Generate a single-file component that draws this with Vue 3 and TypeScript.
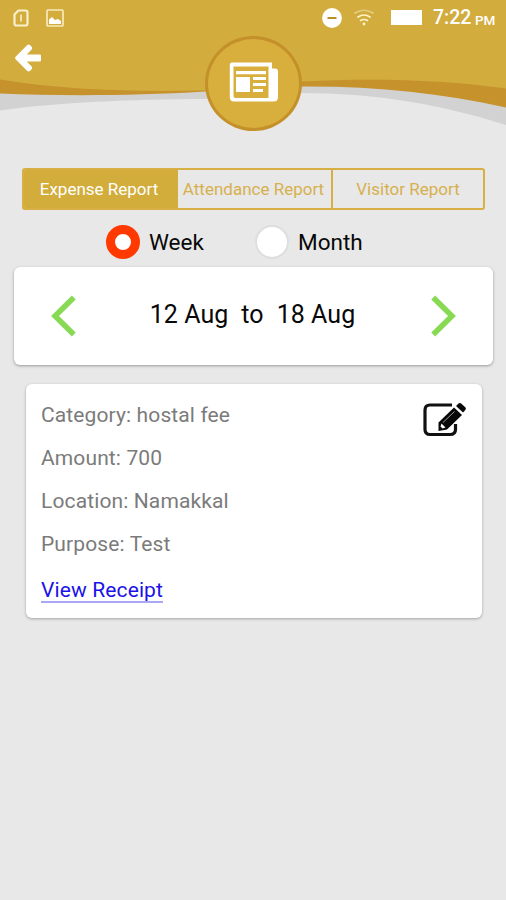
<script setup lang="ts">
import { ref } from 'vue'

interface Detail {
  label: string
  value: string
}

const tabs: string[] = ['Expense Report', 'Attendance Report', 'Visitor Report']
const activeTab = ref(0)
const periods: string[] = ['Week', 'Month']
const period = ref('Week')
const details: Detail[] = [
  { label: 'Category', value: 'hostal fee' },
  { label: 'Amount', value: '700' },
  { label: 'Location', value: 'Namakkal' },
  { label: 'Purpose', value: 'Test' },
]
</script>

<template>
  <div class="screen">
    <header class="header">
      <svg class="wave" viewBox="0 0 506 130" aria-hidden="true">
        <path fill="#d2d2d2" d="M0 0H506V125C440 104 375 93 300 93L205 99C130 99.500 60 102 0 110.500Z" />
        <path fill="#c5922b" d="M0 0H506V107.500C440 93 375 86 302 86.500L205 91.500C130 96 60 96 0 93.500Z" />
        <path fill="#d2ac3d" d="M0 0H506V88.500C440 79 370 78 302 81.500L205 90.500C130 92 65 90 0 79.500Z" />
      </svg>
      <div class="status">
        <svg class="sim" viewBox="0 0 16 18" fill="none" stroke="#faf0cc" stroke-width="2.200">
          <path d="M5.500 1.500H12.500Q14.500 1.500 14.500 3.500V14.500Q14.500 16.500 12.500 16.500H3.500Q1.500 16.500 1.500 14.500V5.500Z" />
          <path d="M8 5.500V12.500" stroke-width="1.600" />
        </svg>
        <svg class="photo" viewBox="0 0 18 18">
          <rect x="1" y="1" width="16" height="16" rx="1" fill="none" stroke="#f8e9b9" stroke-width="1.700" />
          <path d="M3 10.500L6 8L9 11L12 10L15 12V15H3Z" fill="#fff" />
        </svg>
        <span class="spacer"></span>
        <svg class="dnd" viewBox="0 0 20 20">
          <circle cx="10" cy="10" r="9.900" fill="#fff" />
          <path d="M5.500 10H14.500" stroke="#b98f28" stroke-width="2" />
        </svg>
        <svg class="wifi" viewBox="0 0 20 17" fill="none" stroke-linecap="round">
          <path d="M1 4Q10 -1.500 19 4" stroke="#e4cc81" stroke-width="1.700" />
          <path d="M4 8Q10 4 16 8M6.500 11.500Q10 9.500 13.500 11.500" stroke="#fff4cb" stroke-width="1.700" />
          <circle cx="10" cy="15" r="1.400" fill="#fff4cb" />
        </svg>
        <span class="battery"></span>
        <span class="time">7:22</span><span class="meridiem">PM</span>
      </div>
      <button class="back" aria-label="Back">
        <svg viewBox="0 0 26 28">
          <path fill="#fff" d="M.6 12.800L12 1.200Q13.600 -.2 15.200 1.200L16.600 2.800Q17.800 4.300 16.400 5.800L11.800 10.600H24.500Q26 10.600 26 12V16.200Q26 17.600 24.500 17.600H11.800L16.400 22.200Q17.800 23.700 16.600 25.200L15.200 26.800Q13.600 28.200 12 26.800L.6 15.200Q-.4 14 .6 12.800Z" />
        </svg>
      </button>
      <div class="badge">
        <svg viewBox="0 0 50 40">
          <path fill="#fff" fill-rule="evenodd" d="M3 .5H43V6.500H46Q49 6.500 49 9.500V35Q49 39.500 44.500 39.500H5Q.8 39.500 .8 35V2.500Q.8 .5 3 .5ZM4.500 4.500V34Q4.500 36 6.500 36H39.500V4.500Z" />
          <path fill="#fff" d="M7 9H37V12.300H7ZM7 15H21V30H7ZM24 15H37V18H24ZM24 21H37V24H24ZM24 27H34V30H24Z" />
        </svg>
      </div>
    </header>

    <nav class="tabs">
      <button v-for="(tab, i) in tabs" :key="tab" class="tab" :class="{ active: i === activeTab }" @click="activeTab = i">{{ tab }}</button>
    </nav>

    <div class="periods">
      <label v-for="name in periods" :key="name" class="period" @click="period = name">
        <span class="radio" :class="{ checked: period === name }"></span>{{ name }}
      </label>
    </div>

    <section class="range">
      <svg class="chevron" viewBox="0 0 26 42"><path d="M22.800 2.500L4 21L22.800 39.500" /></svg>
      <div class="dates"><span>12 Aug</span><span class="to">to</span><span>18 Aug</span></div>
      <svg class="chevron" viewBox="0 0 26 42"><path d="M3.200 2.500L22 21L3.200 39.500" /></svg>
    </section>

    <article class="expense">
      <div class="details">
        <p v-for="item in details" :key="item.label">{{ item.label }}: {{ item.value }}</p>
        <a class="receipt">View Receipt</a>
      </div>
      <svg class="edit" viewBox="0 0 44 36">
        <path d="M29 3H7Q2 3 2 8V27.500Q2 32.500 7 32.500H27Q32.500 32.500 32.500 27.500V22" fill="none" stroke="#111" stroke-width="3.200" />
        <path fill="#080808" d="M15.500 20.500L31 5.500L39 13L24 27.500L15.500 29Z" />
        <path fill="#080808" d="M33 4L35.500 1.500Q36.800 .3 38.200 1.500L42.500 5.500Q43.500 6.800 42.300 8L40 10.500Z" />
        <path d="M20 20.500L31.500 9.500" stroke="#999" stroke-width="1" />
        <path d="M18.500 21.500L22.500 25.500L19.500 26.500L17.500 24.500Z" fill="#fff" />
      </svg>
    </article>
  </div>
</template>

<style>
body {
  margin: 0;
  background: #e8e8e8;
}
</style>

<style scoped>
.screen {
  box-sizing: border-box;
  width: 506px;
  height: 900px;
  overflow: hidden;
  background: #e8e8e8;
  font-family: Roboto, "Liberation Sans", sans-serif;
}
.header {
  position: relative;
  height: 168px;
}
.wave {
  position: absolute;
  top: 0;
  left: 0;
  width: 506px;
  height: 130px;
}
.status {
  position: relative;
  display: flex;
  align-items: center;
  height: 35px;
  padding: 0 11px 0 13px;
  color: #fff;
}
.sim { width: 16px; height: 18px; }
.photo { width: 18px; height: 18px; margin-left: 17px; }
.spacer { flex: 1; }
.dnd { width: 20px; height: 20px; }
.wifi { width: 20px; height: 17px; margin: 0 17px 0 12px; }
.battery { width: 31px; height: 15px; background: #fff; margin-right: 11px; }
.time { width: 42px; font-size: 19.500px; font-weight: 500; line-height: 36px; padding-top: 1px; white-space: nowrap; }
.meridiem { width: 20px; font-size: 13.500px; font-weight: 500; line-height: 20px; padding-top: 4px; white-space: nowrap; }
.back {
  position: relative;
  display: block;
  margin: 9px 0 0 15px;
  padding: 0;
  border: 0;
  background: none;
  width: 26px;
  height: 28px;
}
.back svg { display: block; width: 26px; height: 28px; }
.badge {
  position: absolute;
  left: 205px;
  top: 36px;
  box-sizing: border-box;
  width: 97px;
  height: 95px;
  border: 3px solid #c4902a;
  border-radius: 50%;
  background: #d8ae3c;
  display: flex;
  align-items: center;
  justify-content: center;
}
.badge svg { width: 50px; height: 40px; margin: 0 0 3px 1px; }
.tabs {
  box-sizing: border-box;
  display: grid;
  grid-template-columns: 154px 155px 1fr;
  width: 463px;
  height: 42px;
  margin-left: 22px;
  border: 2px solid #d7af45;
  border-radius: 3px;
  overflow: hidden;
}
.tab {
  border: 0;
  border-right: 2px solid #d7af45;
  padding: 0 2px 0 0;
  background: transparent;
  color: #d7b04e;
  font: 17px/38px Roboto, "Liberation Sans", sans-serif;
  white-space: nowrap;
}
.tab:last-child { border-right: 0; padding: 0; }
.tab.active { background: #d3ad3b; border-color: #d3ad3b; color: #fff; }
.periods {
  display: flex;
  height: 57px;
  padding: 4px 0 0 106px;
  box-sizing: border-box;
}
.period {
  display: flex;
  align-items: center;
  height: 55px;
  width: 149px;
  color: #080808;
  font-size: 22.500px;
}
.radio {
  box-sizing: border-box;
  width: 34px;
  height: 34px;
  margin: 1px 9px 0 0;
  border: 2px solid #dedede;
  border-radius: 50%;
  background: #fff;
}
.radio.checked { border: 9px solid #ff3900; }
.range {
  box-sizing: border-box;
  display: flex;
  align-items: center;
  justify-content: space-between;
  width: 479px;
  height: 98px;
  margin-left: 14px;
  padding: 0 37px;
  border-radius: 6px;
  background: #fff;
  box-shadow: 0 1px 3px rgba(0, 0, 0, 0.35);
}
.chevron { width: 26px; height: 42px; }
.chevron path { fill: none; stroke: #88d954; stroke-width: 5.500; }
.dates {
  display: flex;
  font-size: 25px;
  line-height: 30px;
  color: #080808;
  letter-spacing: 0.050px;
  white-space: nowrap;
  padding: 0 2px 3px 0;
}
.to { margin: 0 13px; }
.expense {
  box-sizing: border-box;
  display: flex;
  justify-content: space-between;
  width: 456px;
  height: 234px;
  margin: 19px 0 0 26px;
  padding: 9px 15px 0;
  border-radius: 6px;
  background: #fff;
  box-shadow: 0 1px 3px rgba(0, 0, 0, 0.3);
}
.details { padding-top: 1px; color: #7b7b7b; font-size: 21px; letter-spacing: 0.120px; white-space: nowrap; }
.details p { margin: 0; height: 43px; line-height: 43px; }
.receipt {
  display: block;
  width: fit-content;
  margin-top: 11px;
  height: 24px;
  line-height: 26px;
  color: #1a12e8;
  border-bottom: 2px solid #aaa8f5;
}
.edit { width: 44px; height: 36px; margin-top: 9px; }
</style>
